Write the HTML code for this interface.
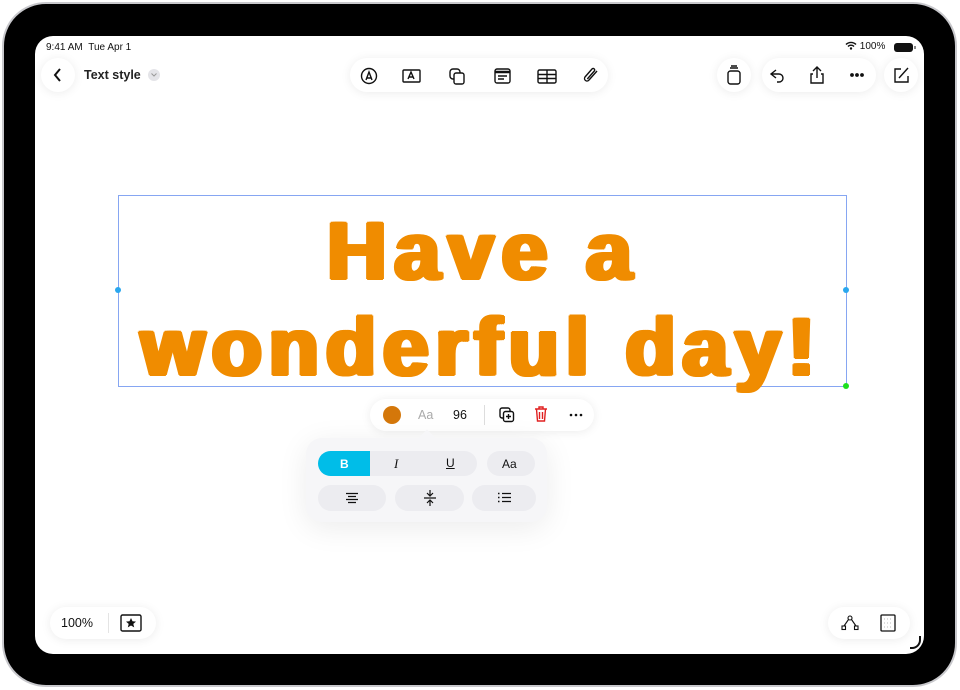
<!DOCTYPE html>
<html><head><meta charset="utf-8"><style>
*{margin:0;padding:0;box-sizing:border-box}
body{width:960px;height:690px;background:#fff;position:relative;overflow:hidden;font-family:"Liberation Sans",sans-serif}
.frame{position:absolute;left:2px;top:2px;width:955px;height:685px;border-radius:44px;background:#000;border:2px solid #c8c8cc}
.screen{position:absolute;left:35px;top:36px;width:889px;height:618px;border-radius:18px;background:#fff;overflow:hidden}
.abs{position:absolute}
.pill{position:absolute;background:#fff;border-radius:20px;box-shadow:0 1px 10px rgba(0,0,0,.08)}
.ic{position:absolute}
.big{position:absolute;left:0;width:100%;text-align:center;color:#f08c00;font-weight:bold;font-size:82px;line-height:1;
text-shadow:1px 0 #f08c00,-1px 0 #f08c00,2px 0 #f08c00,-2px 0 #f08c00,0 1px #f08c00,0 -1px #f08c00,2px 1px #f08c00,-2px 1px #f08c00,2px -1px #f08c00,-2px -1px #f08c00,3px 0 #f08c00,-3px 0 #f08c00}
</style></head><body>
<div class="frame"></div>
<div class="screen">
 <div class="abs" style="left:11px;top:6px;font-size:10px;color:#111">9:41 AM&nbsp;&nbsp;Tue Apr 1</div>
 <div class="abs" style="left:810px;top:5px;font-size:10px;color:#111">
  <svg width="12" height="9" viewBox="0 0 12 9" style="vertical-align:-1px"><path d="M1 3.5a7 7 0 0 1 10 0M3 5.5a4 4 0 0 1 6 0" stroke="#111" stroke-width="1.4" fill="none"/><circle cx="6" cy="7.5" r="1.2" fill="#111"/></svg> 100%</div>
 <div class="abs" style="left:859px;top:7px;width:19px;height:9px;border-radius:3px;background:#111"></div>
 <div class="abs" style="left:879px;top:10px;width:2px;height:3px;background:#888"></div>

 <div class="pill" style="left:6px;top:22px;width:34px;height:34px;border-radius:17px"></div>
 <svg class="ic" style="left:17px;top:31px" width="12" height="16"><path d="M8 2L3 8l5 6" stroke="#111" stroke-width="2" fill="none"/></svg>
 <div class="abs" style="left:49px;top:32px;font-size:12.5px;font-weight:bold;color:#222">Text style</div>
 <div class="abs" style="left:113px;top:33px;width:12px;height:12px;border-radius:6px;background:#e4e4e8"></div>
 <svg class="ic" style="left:116px;top:37px" width="6" height="4"><path d="M0.5 .5L3 3l2.5-2.5" stroke="#999" fill="none"/></svg>

 <div class="pill" style="left:315px;top:22px;width:258px;height:34px;border-radius:17px"></div>
 <svg class="ic" style="left:324px;top:31px" width="240" height="18" fill="none" stroke="#111" stroke-width="1.4">
  <circle cx="10" cy="9" r="7.5"/><path d="M7 13l3-8 3 8M8 11h4"/>
  <rect x="44" y="3" width="17" height="12" rx="1"/><path d="M49 12l3-7 3 7M50 10h4"/>
  <rect x="91" y="2" width="10" height="10" rx="3"/><rect x="95" y="6" width="10" height="11" rx="2" fill="#fff"/>
  <rect x="136" y="2" width="15" height="14" rx="2"/><path d="M136 5h15" stroke-width="2.5"/><path d="M139 9h9M139 12h6"/>
  <rect x="179" y="3" width="18" height="13" rx="1.5"/><path d="M179 7.5h18M179 11.5h18M188 3v13"/>
  <path d="M238 4l-8 9a2.5 2.5 0 0 1-4-3l7-8a1.5 1.5 0 0 1 2.3 2l-7 8"/>
 </svg>

 <div class="pill" style="left:682px;top:22px;width:34px;height:34px;border-radius:17px"></div>
 <svg class="ic" style="left:690px;top:29px" width="18" height="20" fill="none" stroke="#111" stroke-width="1.4"><rect x="3" y="6" width="12" height="13" rx="2.5"/><path d="M5 3h8M6 1h6"/></svg>
 <div class="pill" style="left:727px;top:22px;width:114px;height:34px;border-radius:17px"></div>
 <svg class="ic" style="left:731px;top:29px" width="110" height="20" fill="none" stroke="#111" stroke-width="1.4">
  <path d="M10 5L5 9l5 4M5 9h8a4 4 0 0 1 0 8h-2"/>
  <path d="M51 2v11M47 6l4-4 4 4M47 9h-2v9h12V9h-2"/>
  <circle cx="86" cy="10" r="1.2" fill="#111"/><circle cx="91" cy="10" r="1.2" fill="#111"/><circle cx="96" cy="10" r="1.2" fill="#111"/>
 </svg>
 <div class="pill" style="left:849px;top:22px;width:34px;height:34px;border-radius:17px"></div>
 <svg class="ic" style="left:857px;top:30px" width="18" height="18" fill="none" stroke="#111" stroke-width="1.4"><path d="M9 3H3v13h13v-6"/><path d="M7 12l9-10"/></svg>

 <div class="abs" style="left:83px;top:159px;width:729px;height:192px;border:1px solid #86a6f2"></div>
 <div class="abs" style="left:80px;top:251px;width:6px;height:6px;border-radius:3px;background:#2aa7ee"></div>
 <div class="abs" style="left:808px;top:251px;width:6px;height:6px;border-radius:3px;background:#2aa7ee"></div>
 <div class="abs" style="left:808px;top:347px;width:6px;height:6px;border-radius:3px;background:#1ee01e"></div>
 <div class="big" style="top:175px;letter-spacing:8px;left:4px">Have a</div>
 <div class="big" style="top:271px;letter-spacing:7px;left:2px">wonderful day!</div>

 <div class="pill" style="left:335px;top:363px;width:224px;height:32px;border-radius:16px"></div>
 <div class="abs" style="left:348px;top:370px;width:18px;height:18px;border-radius:9px;background:#d4770a"></div>
 <div class="abs" style="left:383px;top:372px;font-size:12.5px;color:#aaa">Aa</div>
 <div class="abs" style="left:418px;top:372px;font-size:12.5px;color:#111">96</div>
 <div class="abs" style="left:449px;top:369px;width:1px;height:20px;background:#ddd"></div>
 <svg class="ic" style="left:464px;top:371px" width="16" height="16" fill="none" stroke="#111" stroke-width="1.4"><rect x="1" y="1" width="10" height="10" rx="2"/><rect x="4.5" y="4.5" width="10" height="10" rx="2" fill="#fff"/><path d="M9.5 7v5M7 9.5h5"/></svg>
 <svg class="ic" style="left:499px;top:370px" width="14" height="16" fill="none" stroke="#e02020" stroke-width="1.4"><path d="M1 3h12M5 3V1h4v2M2.5 3l1 12h7l1-12M5.5 6v7M8.5 6v7"/></svg>
 <svg class="ic" style="left:534px;top:377px" width="14" height="4" fill="#111"><circle cx="2" cy="2" r="1.3"/><circle cx="7" cy="2" r="1.3"/><circle cx="12" cy="2" r="1.3"/></svg>

 <div class="abs" style="left:271px;top:402px;width:241px;height:84px;border-radius:16px;background:#f6f6f8;box-shadow:0 6px 30px rgba(0,0,0,.08)"></div>
 <div class="abs" style="left:386px;top:396px;width:12px;height:12px;background:#f6f6f8;transform:rotate(45deg)"></div>
 <div class="abs" style="left:283px;top:415px;width:159px;height:25px;border-radius:13px;background:#ececf0;overflow:hidden">
  <div style="width:52px;height:25px;background:#00bde8"></div></div>
 <div class="abs" style="left:305px;top:421px;font-size:12px;font-weight:bold;color:#fff">B</div>
 <div class="abs" style="left:359px;top:420px;font-size:13px;font-style:italic;font-family:'Liberation Serif',serif;color:#111">I</div>
 <div class="abs" style="left:411px;top:420px;font-size:12px;text-decoration:underline;color:#111">U</div>
 <div class="abs" style="left:452px;top:415px;width:48px;height:25px;border-radius:13px;background:#ececf0"></div>
 <div class="abs" style="left:467px;top:421px;font-size:12px;color:#111">Aa</div>
 <div class="abs" style="left:283px;top:449px;width:68px;height:26px;border-radius:13px;background:#ececf0"></div>
 <div class="abs" style="left:360px;top:449px;width:69px;height:26px;border-radius:13px;background:#ececf0"></div>
 <div class="abs" style="left:437px;top:449px;width:64px;height:26px;border-radius:13px;background:#ececf0"></div>
 <svg class="ic" style="left:311px;top:456px" width="12" height="12" stroke="#111" stroke-width="1.2"><path d="M0 1.5h12M2 4.5h8M0 7.5h12M2 10.5h8"/></svg>
 <svg class="ic" style="left:389px;top:454px" width="12" height="16" fill="none" stroke="#111" stroke-width="1.2"><path d="M0 8h12M6 0v5M3 3l3 3 3-3M6 16v-5M3 13l3-3 3 3"/></svg>
 <svg class="ic" style="left:463px;top:456px" width="13" height="11" stroke="#111" stroke-width="1.2"><path d="M4 1.5h9M4 5.5h9M4 9.5h9"/><path d="M0 1.5h1.5M0 5.5h1.5M0 9.5h1.5" stroke-width="1.6"/></svg>

 <div class="pill" style="left:15px;top:571px;width:106px;height:32px;border-radius:16px"></div>
 <div class="abs" style="left:26px;top:580px;font-size:12.5px;color:#111">100%</div>
 <div class="abs" style="left:73px;top:577px;width:1px;height:20px;background:#e4e4e4"></div>
 <svg class="ic" style="left:85px;top:578px" width="22" height="18" fill="none" stroke="#111" stroke-width="1.4"><rect x="1" y="1" width="20" height="16" rx="1.5"/><path d="M11 4l1.5 3.3 3.5.3-2.7 2.3.9 3.5L11 11.5 7.8 13.4l.9-3.5L6 7.6l3.5-.3z" fill="#111" stroke="none"/></svg>
 <div class="pill" style="left:793px;top:571px;width:82px;height:32px;border-radius:16px"></div>
 <svg class="ic" style="left:806px;top:579px" width="18" height="16" fill="none" stroke="#111" stroke-width="1.1"><circle cx="9" cy="3" r="2"/><rect x="1" y="11" width="3.5" height="3.5"/><rect x="13.5" y="11" width="3.5" height="3.5"/><path d="M7.5 4.5L3 11M10.5 4.5L15 11"/></svg>
 <svg class="ic" style="left:845px;top:578px" width="16" height="18" fill="none" stroke="#111" stroke-width="1.3"><rect x="1" y="1" width="14" height="16" rx="1"/><path d="M4 5h8M4 9h8M4 13h8" stroke="#bbb" stroke-dasharray="1 2" stroke-width="1"/></svg>
 <svg class="ic" style="left:873px;top:600px" width="14" height="14" fill="none" stroke="#111" stroke-width="2"><path d="M12 0v4a8 8 0 0 1-8 8H2"/></svg>
</div>
</body></html>
